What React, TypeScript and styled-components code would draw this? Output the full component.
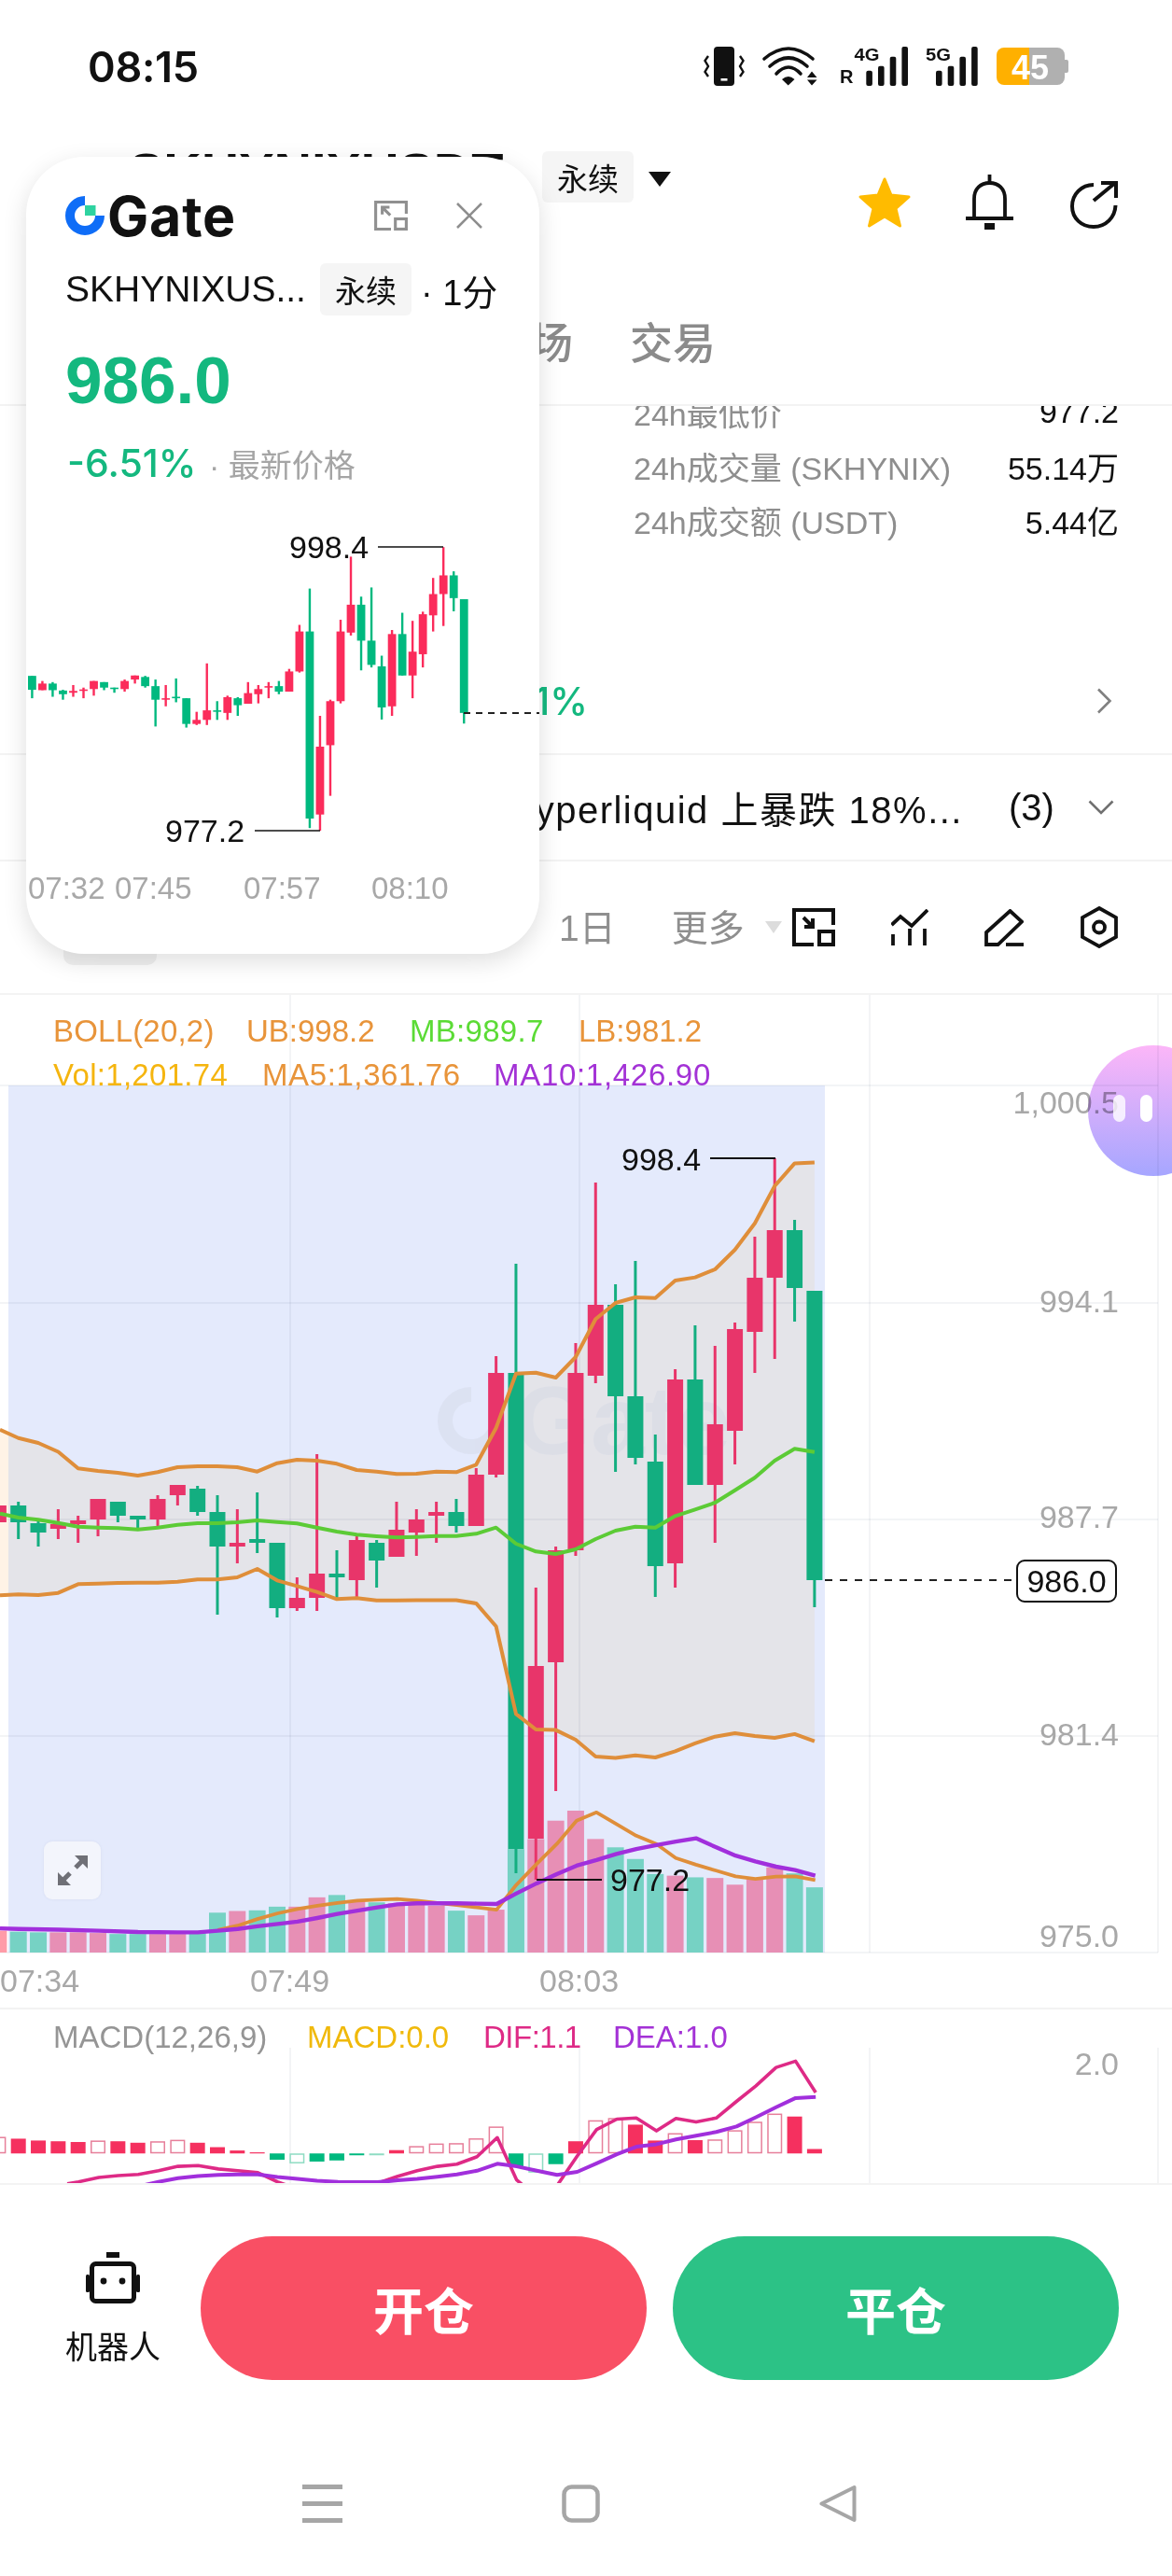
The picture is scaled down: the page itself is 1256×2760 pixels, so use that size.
import React from "react";
import styled, { createGlobalStyle } from "styled-components";

const SANS = `"Liberation Sans", "Noto Sans CJK SC", sans-serif`;

const Global = createGlobalStyle`
  html, body { margin: 0; padding: 0; background: #fff; }
  body { font-family: ${SANS}; }
`;

/* ---------- chart data (screen coordinates of the page) ---------- */
type Candle = [string, number, number, number, number];
const CANDLES: Candle[] = [
  ["g", 1592, 1592, 1630, 1653], ["r", 1606, 1613, 1631, 1631],
  ["g", 1609, 1613, 1631, 1649], ["g", 1630, 1632, 1642, 1657], ["r", 1617, 1633, 1638, 1649], ["r", 1624, 1629, 1633, 1653],
  ["r", 1606, 1606, 1628, 1646], ["g", 1609, 1609, 1624, 1631], ["g", 1624, 1624, 1628, 1638], ["r", 1602, 1606, 1628, 1635],
  ["r", 1591, 1591, 1602, 1613], ["g", 1592, 1595, 1620, 1624], ["g", 1602, 1620, 1657, 1730], ["r", 1617, 1653, 1657, 1675],
  ["g", 1599, 1649, 1653, 1664], ["g", 1653, 1653, 1723, 1733], ["r", 1690, 1712, 1723, 1726], ["r", 1558, 1686, 1712, 1726],
  ["g", 1661, 1686, 1690, 1712], ["r", 1646, 1650, 1693, 1712], ["g", 1650, 1653, 1672, 1701], ["r", 1609, 1639, 1668, 1668],
  ["r", 1617, 1628, 1642, 1667], ["r", 1609, 1620, 1624, 1653], ["g", 1606, 1620, 1635, 1642], ["r", 1573, 1580, 1635, 1635],
  ["r", 1453, 1471, 1580, 1583], ["g", 1354, 1471, 1981, 2007], ["r", 1701, 1785, 1970, 2014], ["r", 1657, 1661, 1781, 1919],
  ["r", 1439, 1471, 1661, 1667], ["r", 1267, 1398, 1474, 1482], ["g", 1376, 1398, 1496, 1577], ["g", 1351, 1496, 1562, 1569],
  ["g", 1537, 1566, 1678, 1711], ["r", 1467, 1478, 1675, 1701], ["g", 1420, 1478, 1591, 1591], ["r", 1442, 1526, 1591, 1653],
  ["r", 1417, 1424, 1533, 1569], ["r", 1325, 1369, 1427, 1471], ["r", 1241, 1318, 1369, 1456], ["g", 1307, 1318, 1380, 1416],
  ["g", 1383, 1383, 1693, 1722],
];
const X = (i: number) => 19.7 + 21.33 * i;

const UPPER = [1540.7, 1546, 1555.5, 1573.3, 1576, 1578, 1581, 1577.3, 1572, 1571, 1571, 1572, 1576.7, 1567.7, 1564, 1565, 1568.3, 1575, 1576.7, 1579.3, 1579, 1576.7, 1577.3, 1569.3, 1530, 1471.7, 1470.7, 1476, 1454, 1413.3, 1396, 1390, 1390.7, 1372, 1368.6, 1360, 1339, 1310.7, 1270.7, 1246.4, 1245.4];
const MID = [1626, 1628.3, 1631.7, 1635.7, 1636.7, 1637.3, 1638.7, 1636.7, 1633.7, 1632, 1632, 1631, 1629, 1630.7, 1632.3, 1636.7, 1641, 1644.3, 1646, 1647.3, 1646.7, 1645.7, 1645.7, 1643.3, 1636.7, 1654, 1662.3, 1665, 1660, 1649, 1640, 1635.7, 1636.7, 1624.3, 1617.3, 1610, 1596.7, 1583.3, 1565, 1552.3, 1555.7];
const LOWER = [1708.3, 1709, 1706.7, 1697.3, 1696.7, 1696, 1695.7, 1695.7, 1694.7, 1692.3, 1692.3, 1690, 1681, 1693.3, 1699.3, 1705.7, 1713.3, 1712.3, 1714.7, 1714.7, 1714.6, 1714.6, 1714.6, 1717.9, 1742.5, 1836.4, 1853, 1853.6, 1864, 1882, 1883.6, 1880.7, 1883, 1876.4, 1867.9, 1860.7, 1857, 1860, 1862, 1857.9, 1865.7];

const toPts = (ys: number[], startY: number) =>
  `0,${startY} ` + ys.map((y, i) => `${X(i).toFixed(1)},${y}`).join(" ");

type P = [number, number];
const z6 = (ps: P[]): P[] => ps.map(([x, y]) => [x / 2.497, 1640 + y / 2.8]);
const z7 = (ps: P[]): P[] => ps.map(([x, y]) => [500 + x / 2.074, 1640 + y / 2.8]);
const pts = (ps: P[]) => ps.map(([x, y]) => `${x.toFixed(1)},${y.toFixed(1)}`).join(" ");

const MA5 = [
  ...z6([[583, 1198], [636, 1185], [689, 1165], [743, 1148], [796, 1135], [849, 1125], [903, 1117], [956, 1110], [1010, 1107], [1063, 1105], [1116, 1110], [1170, 1117], [1222, 1123], [1276, 1130], [1329, 1137], [1382, 1062], [1436, 1000], [1490, 940], [1543, 870]]),
  ...z7([[289, 845], [333, 880], [377, 915], [422, 940], [465, 982], [510, 1002], [555, 1020], [598, 1037], [642, 1045], [688, 1038], [730, 1037], [775, 1048]]),
];
const MA10 = [
  ...z6([[0, 1193], [50, 1195], [156, 1197], [263, 1200], [369, 1204], [476, 1205], [529, 1205], [583, 1200], [636, 1195], [689, 1187], [743, 1180], [796, 1173], [849, 1162], [903, 1150], [956, 1140], [1010, 1130], [1063, 1121], [1116, 1118], [1170, 1118], [1222, 1118], [1276, 1119], [1329, 1120], [1382, 1088], [1436, 1058], [1490, 1030], [1543, 1005]]),
  ...z7([[289, 988], [333, 970], [377, 955], [422, 943], [465, 933], [510, 923], [555, 950], [598, 975], [642, 992], [688, 1008], [730, 1018], [775, 1035]]),
];

const VOL: [string, number][] = [
  ["o", 1200], ["t", 1203], ["t", 1205], ["p", 1205], ["p", 1205], ["p", 1207], ["t", 1210], ["t", 1210], ["p", 1210], ["p", 1210], ["t", 1208], ["t", 1146], ["p", 1141], ["t", 1139], ["t", 1128], ["p", 1128], ["p", 1100], ["t", 1093], ["p", 1110], ["t", 1115], ["p", 1118], ["p", 1120], ["p", 1125], ["t", 1140], ["p", 1154], ["p", 1137], ["t", 955], ["p", 925], ["p", 870], ["p", 840], ["p", 925], ["t", 950], ["t", 985], ["t", 1030], ["p", 1035], ["t", 1040], ["p", 1042], ["p", 1062], ["p", 1045], ["p", 1010], ["t", 1028], ["t", 1070],
];
const VOL_FILL: Record<string, string> = { o: "#FF9CA8", t: "#76D2C4", p: "#E78FB5" };

/* kind: R solid red, r hollow red, G solid green, g hollow green; y in zoom rows */
const MACD_BARS: [string, number][] = [
  ["r", 378], ["R", 383], ["R", 388], ["R", 390], ["R", 392], ["r", 388], ["R", 390], ["R", 394], ["r", 390], ["r", 386], ["R", 394], ["R", 406], ["R", 415], ["R", 420],
  ["G", 440], ["g", 450], ["G", 445], ["G", 442], ["G", 428], ["g", 427],
  ["R", 414], ["r", 403], ["r", 396], ["r", 395], ["r", 382], ["r", 350],
  ["G", 460], ["g", 475], ["G", 452],
  ["R", 390], ["r", 333], ["r", 327], ["R", 345], ["R", 388], ["r", 368], ["R", 387], ["r", 385], ["r", 360], ["r", 337], ["r", 315], ["R", 323], ["R", 411],
];
const zm = (ps: P[]) => ps.map(([x, y]) => `${(x / 1.248).toFixed(1)},${(2140 + y / 2.529).toFixed(1)}`).join(" ");
const MY = (y: number) => 2140 + y / 2.529;
const DIF = zm([[90, 505], [105, 500], [132, 488], [158, 483], [185, 480], [212, 470], [238, 458], [265, 456], [292, 465], [318, 470], [345, 475], [371, 500], [385, 510], [425, 540], [480, 540], [510, 500], [532, 485], [558, 470], [585, 458], [611, 452], [638, 432], [665, 380], [691, 495], [700, 510], [745, 510], [772, 430], [798, 358], [825, 330], [851, 327], [878, 362], [904, 328], [931, 338], [958, 327], [985, 282], [1011, 240], [1038, 190], [1064, 173], [1091, 258]]);
const DEA = zm([[190, 510], [212, 500], [238, 490], [265, 484], [292, 481], [318, 480], [345, 480], [371, 487], [398, 492], [424, 497], [452, 500], [478, 501], [505, 501], [532, 496], [558, 492], [585, 486], [611, 480], [638, 470], [665, 451], [691, 458], [718, 470], [745, 481], [772, 473], [798, 450], [825, 425], [851, 405], [878, 398], [904, 385], [931, 375], [958, 365], [985, 350], [1011, 325], [1038, 298], [1064, 273], [1091, 270]]);

/* ---------- page ---------- */
const Page = styled.div`
  position: relative;
  width: 1256px;
  height: 2760px;
  overflow: hidden;
  background: #fff;
  display: flex;
  flex-direction: column;
  color: #111;
  font-family: ${SANS};
`;

const StatusBar = styled.div`
  height: 142px;
  flex: none;
  display: flex;
  align-items: center;
  padding: 0 111px 0 94px;
  box-sizing: border-box;
`;
const Clock = styled.div`
  font-family: Inter, ${SANS};
  font-size: 45px;
  font-weight: 600;
  letter-spacing: -0.3px;
  color: #111;
`;
const StatusIcons = styled.div`
  margin-left: auto;
  display: flex;
  align-items: center;
  svg { display: block; flex: none; overflow: visible; }
`;

const HeaderRow = styled.div`
  height: 158px;
  flex: none;
  display: flex;
  align-items: flex-start;
  padding: 0 57px 0 138px;
  box-sizing: border-box;
`;
const Title = styled.div`
  width: 399px;
  margin-top: 12px;
  font-size: 56px;
  font-weight: 700;
  line-height: 60px;
  white-space: nowrap;
`;
const Tag = styled.div<{ $w: number; $h: number }>`
  width: ${(p) => p.$w}px;
  height: ${(p) => p.$h}px;
  flex: none;
  display: flex;
  align-items: center;
  justify-content: center;
  background: #f5f5f5;
  border-radius: 6px;
  font-size: 33px;
  color: #111;
`;
const HeaderTag = styled(Tag)`
  margin: 20px 0 0 44px;
`;
const HeaderGlyph = styled.div<{ $top: number; $left: number }>`
  margin: ${(p) => p.$top}px 0 0 ${(p) => p.$left}px;
  flex: none;
  line-height: 0;
`;

const TabsRow = styled.div`
  height: 135px;
  flex: none;
  box-sizing: border-box;
  border-bottom: 2px solid #f3f3f3;
  padding-bottom: 6px;
  display: flex;
  align-items: center;
  padding-left: 522px;
  gap: 61px;
`;
const TabLabel = styled.div`
  font-size: 46px;
  font-weight: 500;
  color: #8b8b8b;
`;

const StatsClip = styled.div`
  height: 260px;
  flex: none;
  overflow: hidden;
  padding: 0 57px 0 679px;
  box-sizing: border-box;
`;
const StatsInner = styled.div`
  margin-top: -23px;
`;
const StatRow = styled.div`
  height: 58px;
  display: flex;
  align-items: center;
  justify-content: space-between;
  font-size: 34px;
`;
const StatLabel = styled.span`
  color: #8e8e8e;
`;
const StatValue = styled.span`
  color: #111;
`;

const FundingRow = styled.div`
  height: 114px;
  flex: none;
  box-sizing: border-box;
  border-bottom: 2px solid #f3f3f3;
  display: flex;
  align-items: center;
  padding-right: 64px;
`;
const FundingValue = styled.div`
  width: 630px;
  text-align: right;
  font-family: Inter, ${SANS};
  font-size: 41px;
  font-weight: 500;
  color: #14b87f;
`;
const NewsRow = styled.div`
  height: 114px;
  flex: none;
  box-sizing: border-box;
  border-bottom: 2px solid #f3f3f3;
  display: flex;
  align-items: center;
`;
const NewsText = styled.div`
  width: 1032px;
  text-align: right;
  white-space: nowrap;
  font-size: 40px;
  letter-spacing: 1.5px;
  color: #111;
`;
const NewsCount = styled.div`
  margin-left: 49px;
  font-size: 40px;
  color: #111;
`;

const Toolbar = styled.div`
  height: 143px;
  flex: none;
  box-sizing: border-box;
  border-bottom: 2px solid #f3f3f3;
  display: flex;
  align-items: center;
  padding-left: 68px;
`;
const ActivePill = styled.div`
  width: 100px;
  height: 65px;
  margin-top: 16px;
  border-radius: 10px;
  background: #f1f1f1;
  flex: none;
`;
const ToolLabel = styled.div<{ $ml: number }>`
  margin-left: ${(p) => p.$ml}px;
  margin-top: -5px;
  font-size: 39px;
  color: #8f8f8f;
  white-space: nowrap;
  flex: none;
`;
const ToolIcon = styled.div<{ $ml: number }>`
  margin-left: ${(p) => p.$ml}px;
  line-height: 0;
  flex: none;
`;

const ChartSection = styled.div`
  position: relative;
  height: 1085px;
  flex: none;
`;
const ChartSvg = styled.svg`
  display: block;
`;
const Legend = styled.div<{ $top: number }>`
  position: absolute;
  left: 57px;
  top: ${(p) => p.$top}px;
`;
const LegendRow = styled.div`
  display: flex;
  height: 47px;
  align-items: center;
  white-space: nowrap;
`;
const LegendItem = styled.span<{ $w?: number; $c: string; $ls?: number }>`
  font-size: 33px;
  color: ${(p) => p.$c};
  letter-spacing: ${(p) => p.$ls ?? 0}px;
  width: ${(p) => (p.$w ? `${p.$w}px` : "auto")};
  flex: none;
`;
const ChartText = styled.text<{ $c: string; $size?: number }>`
  font-family: ${SANS};
  font-size: ${(p) => p.$size ?? 34}px;
  fill: ${(p) => p.$c};
  dominant-baseline: central;
`;
const ExpandButton = styled.div`
  position: absolute;
  left: 47px;
  top: 907px;
  width: 61px;
  height: 62px;
  border-radius: 9px;
  background: #f3f5fc;
  box-shadow: 0 0 3px rgba(120, 130, 160, 0.12);
  display: flex;
  align-items: center;
  justify-content: center;
`;

const MacdSection = styled.div`
  position: relative;
  flex: none;
  border-top: 2px solid #f3f3f3;
  border-bottom: 2px solid #f3f3f3;
`;

const ActionBar = styled.div`
  display: flex;
  flex: none;
  height: 154px;
  margin-top: 55px;
  padding-left: 70px;
`;
const Robot = styled.div`
  width: 102px;
  flex: none;
  display: flex;
  flex-direction: column;
  align-items: center;
  padding-top: 17px;
  box-sizing: border-box;
`;
const RobotLabel = styled.div`
  margin-top: 27px;
  font-size: 34px;
  line-height: 40px;
  color: #111;
`;
const ActionButton = styled.div<{ $bg: string; $ml: number }>`
  width: 478px;
  height: 154px;
  margin-left: ${(p) => p.$ml}px;
  border-radius: 77px;
  background: ${(p) => p.$bg};
  color: #fff;
  font-size: 54px;
  font-weight: 700;
  display: flex;
  align-items: center;
  justify-content: center;
  flex: none;
`;
const NavBar = styled.div`
  flex: none;
  margin-top: 112px;
  padding-left: 324px;
  display: flex;
  gap: 235px;
  svg { display: block; flex: none; }
`;

/* floating picture-in-picture card */
const FloatCard = styled.div`
  position: absolute;
  left: 28px;
  top: 168px;
  width: 550px;
  height: 854px;
  border-radius: 62px;
  background: #fff;
  box-shadow: 0 8px 26px rgba(0, 0, 0, 0.13);
  overflow: hidden;
  display: flex;
  flex-direction: column;
`;
const FloatLogoRow = styled.div`
  height: 102px;
  margin-top: 12px;
  flex: none;
  display: flex;
  align-items: center;
  padding-left: 42px;
  svg { display: block; flex: none; }
`;
const GateWord = styled.span`
  width: 139px;
  flex: none;
  margin-left: 3px;
  font-family: Inter, ${SANS};
  font-weight: 700;
  font-size: 59px;
  letter-spacing: 0.8px;
  color: #111;
`;
const SymbolRow = styled.div`
  height: 56px;
  flex: none;
  display: flex;
  align-items: center;
  padding-left: 42px;
  font-size: 39px;
  white-space: nowrap;
`;
const SymbolName = styled.span`
  width: 273px;
  flex: none;
`;
const SymbolSuffix = styled.span`
  margin-left: 10px;
  font-size: 38px;
`;
const PriceRow = styled.div`
  height: 100px;
  margin-top: 19px;
  flex: none;
  display: flex;
  align-items: center;
  padding-left: 42px;
  font-size: 71px;
  font-weight: 700;
  color: #14b87f;
`;
const ChangeRow = styled.div`
  height: 78px;
  flex: none;
  display: flex;
  align-items: center;
  padding-left: 44px;
`;
const ChangeValue = styled.span`
  width: 152px;
  flex: none;
  font-family: Inter, ${SANS};
  font-size: 41px;
  font-weight: 500;
  color: #14b87f;
`;
const ChangeHint = styled.span`
  font-size: 34px;
  color: #a5a5a5;
`;

const AssistBlob = styled.div`
  position: absolute;
  left: 1166px;
  top: 1120px;
  width: 140px;
  height: 140px;
  border-radius: 50%;
  background: linear-gradient(180deg, #fcb6f8 0%, #a6a6ff 100%);
  mix-blend-mode: multiply;
`;
const BlobEye = styled.span<{ $l: number; $o: number }>`
  position: absolute;
  top: 1173px;
  left: ${(p) => p.$l}px;
  width: 13px;
  height: 29px;
  border-radius: 7px;
  background: #fff;
  opacity: ${(p) => p.$o};
`;

/* ---------- icons ---------- */
const VibrateIcon = () => (
  <svg width="44" height="42" viewBox="0 0 44 42">
    <rect x="11" y="0" width="22" height="42" rx="4" fill="#111" />
    <rect x="18.5" y="34" width="7" height="2.6" fill="#fff" />
    <g fill="none" stroke="#111" strokeWidth="2.4">
      <polyline points="5,10 1.5,15 5,21 1.5,27 5,32" />
      <polyline points="39,10 42.5,15 39,21 42.5,27 39,32" />
    </g>
  </svg>
);
const WifiIcon = () => (
  <svg width="60" height="42" viewBox="0 0 60 42">
    <g fill="none" stroke="#111" strokeWidth="3.6" strokeLinecap="round">
      <path d="M2 13 Q28 -9 54 13" />
      <path d="M8 21 Q28 3 48 21" />
      <path d="M15 29 Q28 15 41 29" />
    </g>
    <path d="M21 35 Q28 29 34.5 35 L27.7 41.5 Z" fill="#111" />
    <path d="M48 33 L58.5 33 L53 26.5 Z M48 35.5 L58.5 35.5 L53 41.5 Z" fill="#111" />
  </svg>
);
const CellIcon = ({ label, roaming }: { label: string; roaming?: boolean }) => {
  const ox = roaming ? 28.3 : 11;
  return (
    <svg width={roaming ? 73 : 55} height="42" viewBox={`0 0 ${roaming ? 73 : 55} 42`}>
      {roaming && (
        <ChartText x="0" y="32" $c="#111" $size={20} fontWeight="700">R</ChartText>
      )}
      <ChartText x={roaming ? 15.5 : 0} y="8.5" $c="#111" $size={19} fontWeight="700" textLength="27" lengthAdjust="spacingAndGlyphs">{label}</ChartText>
      {[25.7, 20.7, 10.7, 0].map((t, i) => (
        <rect key={i} x={ox + i * 12.7} y={t} width="6.6" height={42 - t} rx="2" fill="#111" />
      ))}
    </svg>
  );
};
const BatteryIcon = () => (
  <svg width="77" height="40" viewBox="0 0 77 40">
    <path d="M8 0 H35 V40 H8 A8 8 0 0 1 0 32 V8 A8 8 0 0 1 8 0 Z" fill="#FFB000" />
    <path d="M35 0 H65 A8 8 0 0 1 73 8 V32 A8 8 0 0 1 65 40 H35 Z" fill="#B0B0B0" />
    <path d="M73 13 H75 A2 2 0 0 1 77 15 V25 A2 2 0 0 1 75 27 H73 Z" fill="#B0B0B0" />
    <ChartText x="36" y="21" textAnchor="middle" $c="#fff" $size={36} fontWeight="700">45</ChartText>
  </svg>
);
const StarIcon = () => (
  <svg width="58" height="56" viewBox="0 0 58 56">
    <path d="M29 3 L36 20 L55 22 L41 34.5 L45.5 53 L29 43 L12.5 53 L17 34.5 L3 22 L22 20 Z" fill="#FFBB00" stroke="#FFBB00" strokeWidth="3" strokeLinejoin="round" />
  </svg>
);
const BellIcon = () => (
  <svg width="51" height="59" viewBox="0 0 51 59">
    <g fill="none" stroke="#111" strokeWidth="3.8">
      <path d="M9 47 V26 C9 15 16 9 25.5 9 C35 9 42 15 42 26 V47" />
      <path d="M0 47 H51" />
      <path d="M25.5 0 V9" />
    </g>
    <rect x="20" y="52" width="11" height="7" fill="#111" />
  </svg>
);
const ShareIcon = () => (
  <svg width="51" height="52" viewBox="0 0 51 52">
    <g fill="none" stroke="#111" strokeWidth="4">
      <path d="M25 5 C12 5 2 15 2 28 C2 41 12 50 25 50 C38 50 48 40 48.5 27" />
      <path d="M25 22 L48 3" />
      <path d="M33 3 H49 V19" />
    </g>
  </svg>
);
const ChevronRight = () => (
  <svg width="17" height="28" viewBox="0 0 17 28">
    <path d="M2 1.5 L14.5 14 L2 26.5" fill="none" stroke="#808080" strokeWidth="2.6" />
  </svg>
);
const ChevronDown = () => (
  <svg width="28" height="16" viewBox="0 0 28 16">
    <path d="M1.5 1.5 L14 14 L26.5 1.5" fill="none" stroke="#707070" strokeWidth="2.6" />
  </svg>
);
const SmallCaret = () => (
  <svg width="18" height="13" viewBox="0 0 18 13">
    <path d="M0 0 H18 L9 13 Z" fill="#dcdcdc" />
  </svg>
);
const PipIcon = ({ color = "#111", size = 46, h = 41, inward = true }: { color?: string; size?: number; h?: number; inward?: boolean }) => (
  <svg width={size} height={h} viewBox="0 0 46 41">
    <g fill="none" stroke={color} strokeWidth="4">
      <path d="M23 39 H2 V2 H44 V18" />
      <rect x="29" y="25" width="15" height="14" />
      {inward ? <path d="M12 10 L22 20 M22 11 V20 H13" /> : <path d="M22 20 L11 9 M11 19 V9 H21" />}
    </g>
  </svg>
);
const IndicatorIcon = () => (
  <svg width="40" height="40" viewBox="0 0 40 40">
    <g fill="none" stroke="#111" strokeWidth="3.8">
      <path d="M0.5 17 L10 8 L22 18 L39 1" />
      <path d="M2 27 V39 M20 21 V39 M36 21 V39" />
    </g>
  </svg>
);
const PenIcon = () => (
  <svg width="42" height="40" viewBox="0 0 42 40">
    <g fill="none" stroke="#111" strokeWidth="3.8">
      <path d="M2 25 L27.5 2 L40 13.5 L14.5 38 H2 Z" />
      <path d="M23 38 H42" />
    </g>
  </svg>
);
const HexIcon = () => (
  <svg width="40" height="45" viewBox="0 0 40 45">
    <g fill="none" stroke="#111" strokeWidth="3.8">
      <path d="M20 2 L38 12 V33 L20 43 L2 33 V12 Z" />
      <circle cx="20" cy="22.5" r="6" />
    </g>
  </svg>
);
const ExpandIcon = () => (
  <svg width="32" height="32" viewBox="0 0 32 32">
    <path d="M18 0 H32 V14 Z M0 18 V32 H14 Z" fill="#6f7077" />
    <path d="M27 5 L19 13 M5 27 L13 19" stroke="#6f7077" strokeWidth="5" />
  </svg>
);
const RobotIcon = () => (
  <svg width="58" height="55" viewBox="0 0 58 55">
    <rect x="22" y="0" width="14" height="6" fill="#111" />
    <rect x="6.5" y="12.5" width="45" height="40" rx="4" fill="none" stroke="#111" strokeWidth="5" />
    <rect x="0" y="24" width="4" height="19" rx="1.5" fill="#111" />
    <rect x="54" y="24" width="4" height="19" rx="1.5" fill="#111" />
    <circle cx="19" cy="31" r="3.4" fill="#111" />
    <circle cx="39" cy="31" r="3.4" fill="#111" />
  </svg>
);
const NavMenu = () => (
  <svg width="43" height="41" viewBox="0 0 43 41">
    <path d="M0 2.5 H43 M0 20.5 H43 M0 38.5 H43" stroke="#a6a6a6" strokeWidth="5" />
  </svg>
);
const NavHome = () => (
  <svg width="41" height="41" viewBox="0 0 41 41">
    <rect x="2.5" y="2.5" width="36" height="36" rx="8" fill="none" stroke="#a6a6a6" strokeWidth="4.5" />
  </svg>
);
const NavBack = () => (
  <svg width="40" height="41" viewBox="0 0 40 41">
    <path d="M37.5 3 V38 L2.5 20.5 Z" fill="none" stroke="#a6a6a6" strokeWidth="4" strokeLinejoin="round" />
  </svg>
);
const GateMark = () => (
  <svg width="42" height="42" viewBox="0 0 42 42">
    <path d="M21 5 A16 16 0 1 0 37 21" fill="none" stroke="#0F6DF7" strokeWidth="10" />
    <rect x="21" y="10" width="11.5" height="11" fill="#2ED3A0" />
  </svg>
);
const CloseIcon = () => (
  <svg width="28" height="28" viewBox="0 0 28 28">
    <path d="M1 1 L27 27 M27 1 L1 27" stroke="#8e8e8e" strokeWidth="2.6" />
  </svg>
);

/* ---------- chart drawings ---------- */
const MainChart = () => {
  const bandPoly = `${UPPER.map((y, i) => `${X(i).toFixed(1)},${y}`).join(" ")} ${LOWER.map((y, i) => `${X(i).toFixed(1)},${y}`).reverse().join(" ")}`;
  const GRID = "rgba(40,50,90,0.055)";
  return (
    <ChartSvg width="1256" height="1085" viewBox="0 1066 1256 1085">
      <rect x="9" y="1163" width="875" height="929" fill="#E4EAFC" />
      <polygon points={`0,1532 9,1536 9,1709 0,1709`} fill="#FFF3E6" />
      <polygon points={`9,1537 ${bandPoly} 9,1709`} fill="#E4E4E9" />
      {[311, 621, 932, 1241].map((x) => (
        <line key={x} x1={x} x2={x} y1="1066" y2="2092" stroke={GRID} strokeWidth="2" />
      ))}
      {[1163, 1396, 1628, 1860, 2092].map((y) => (
        <line key={y} x1="0" x2="1241" y1={y} y2={y} stroke={GRID} strokeWidth="2" />
      ))}
      <g opacity="0.42">
        <path d="M505 1494 A28 28 0 1 0 533 1522" fill="none" stroke="#D2D7E4" strokeWidth="16" />
        <ChartText x="552" y="1522" $c="#D2D7E4" $size={104} fontWeight="700">Gate</ChartText>
      </g>
      {VOL.map(([k, t], n) => {
        const y = 1640 + t / 2.8;
        return <rect key={n} x={X(n - 1) - 9} y={y} width="18" height={2092 - y} fill={VOL_FILL[k]} />;
      })}
      {CANDLES.map(([c, wt, bt, bb, wb], n) => {
        const x = X(n - 2);
        const fill = c === "g" ? "#13AE80" : "#E8356A";
        return (
          <g key={n} fill={fill}>
            <rect x={x - 1.5} y={wt} width="3" height={wb - wt} />
            <rect x={x - 8.5} y={bt} width="17" height={bb - bt} />
          </g>
        );
      })}
      <g fill="none" strokeLinejoin="round">
        <polyline points={toPts(UPPER, 1531.8)} stroke="#DF8E3A" strokeWidth="4" />
        <polyline points={toPts(LOWER, 1709.3)} stroke="#DF8E3A" strokeWidth="4" />
        <polyline points={toPts(MID, 1621.7)} stroke="#5CCB36" strokeWidth="4" />
        <polyline points={pts(MA5)} stroke="#DF8E3A" strokeWidth="3.8" />
        <polyline points={pts(MA10)} stroke="#A12FDC" strokeWidth="4.4" />
      </g>
      <line x1="761" x2="831" y1="1241" y2="1241" stroke="#111" strokeWidth="2" />
      <ChartText x="666" y="1242" $c="#111">998.4</ChartText>
      <line x1="575" x2="645" y1="2014" y2="2014" stroke="#111" strokeWidth="2" />
      <ChartText x="654" y="2014" $c="#111">977.2</ChartText>
      <line x1="884" x2="1084" y1="1693" y2="1693" stroke="#222" strokeWidth="2" strokeDasharray="8 8" />
      <rect x="1090" y="1672" width="106" height="44" rx="8" fill="#fff" stroke="#111" strokeWidth="2" />
      <ChartText x="1143" y="1694" textAnchor="middle" $c="#111">986.0</ChartText>
      {[["1,000.5", 1181], ["994.1", 1394], ["987.7", 1625], ["981.4", 1858], ["975.0", 2074]].map(([t, y]) => (
        <ChartText key={t as string} x="1199" y={y as number} textAnchor="end" $c="#A8A8A8">{t}</ChartText>
      ))}
      {[["07:34", 0], ["07:49", 268], ["08:03", 578]].map(([t, x]) => (
        <ChartText key={t as string} x={x as number} y="2122" $c="#A8A8A8">{t}</ChartText>
      ))}
    </ChartSvg>
  );
};

const MacdChart = () => {
  const zero = MY(423);
  const GRID = "rgba(40,50,90,0.055)";
  return (
    <ChartSvg width="1256" height="186" viewBox="0 2153 1256 186">
      {[311, 621, 932, 1241].map((x) => (
        <line key={x} x1={x} x2={x} y1="2194" y2="2339" stroke={GRID} strokeWidth="2" />
      ))}
      {MACD_BARS.map(([k, z], n) => {
        const x = X(n - 1) - 8;
        const y = MY(z);
        const up = k === "r" || k === "R";
        const top = Math.min(y, zero);
        const h = Math.abs(zero - y);
        const solid = k === "R" || k === "G";
        const col = up ? "#F5305F" : "#00B97F";
        if (solid) return <rect key={n} x={x} y={top} width="16" height={h} fill={col} />;
        return (
          <rect key={n} x={x + 0.75} y={top + 0.75} width="14.5" height={Math.max(h - 1.5, 0.5)} fill="#fff" stroke={up ? "#E77F9A" : "#8FDCC3"} strokeWidth="1.5" />
        );
      })}
      <g fill="none" strokeLinejoin="round">
        <polyline points={DIF} stroke="#DE2A86" strokeWidth="3.6" />
        <polyline points={DEA} stroke="#A12FDC" strokeWidth="4" />
      </g>
      <ChartText x="1199" y="2211" textAnchor="end" $c="#A8A8A8">2.0</ChartText>
    </ChartSvg>
  );
};

const MiniChart = () => {
  const my = (y: number) => 586.2 + (y - 1241) * 0.393;
  return (
    <ChartSvg width="550" height="487" viewBox="28 535 550 487">
      {CANDLES.map(([c, wt, bt, bb, wb], j) => {
        const x = 34.4 + 11.02 * j;
        const fill = c === "g" ? "#00B97F" : "#FB2C5B";
        return (
          <g key={j} fill={fill}>
            <rect x={x - 1.2} y={my(wt)} width="2.4" height={my(wb) - my(wt)} />
            <rect x={x - 4.4} y={my(bt)} width="8.8" height={Math.max(my(bb) - my(bt), 1.5)} />
          </g>
        );
      })}
      <line x1="405" x2="475" y1="586" y2="586" stroke="#111" strokeWidth="1.6" />
      <ChartText x="310" y="586" $c="#111">998.4</ChartText>
      <line x1="273" x2="343" y1="890" y2="890" stroke="#111" strokeWidth="1.6" />
      <ChartText x="177" y="890" $c="#111">977.2</ChartText>
      <line x1="497" x2="578" y1="764" y2="764" stroke="#222" strokeWidth="2" strokeDasharray="7 6" />
      {[["07:32", 30], ["07:45", 123], ["07:57", 261], ["08:10", 398]].map(([t, x]) => (
        <ChartText key={t as string} x={x as number} y="951" $c="#A8A8A8" $size={33}>{t}</ChartText>
      ))}
    </ChartSvg>
  );
};

export default function App() {
  return (
    <Page>
      <Global />
      <StatusBar>
        <Clock>08:15</Clock>
        <StatusIcons>
          <VibrateIcon />
          <HeaderGlyph $top={0} $left={19}><WifiIcon /></HeaderGlyph>
          <HeaderGlyph $top={0} $left={23}><CellIcon label="4G" roaming /></HeaderGlyph>
          <HeaderGlyph $top={0} $left={19}><CellIcon label="5G" /></HeaderGlyph>
          <HeaderGlyph $top={0} $left={21}><BatteryIcon /></HeaderGlyph>
        </StatusIcons>
      </StatusBar>

      <HeaderRow>
        <Title>SKHYNIXUSDT</Title>
        <HeaderTag $w={98} $h={55}>永续</HeaderTag>
        <HeaderGlyph $top={42} $left={16}>
          <svg width="24" height="16" viewBox="0 0 24 16"><path d="M0 0 H24 L12 16 Z" fill="#111" /></svg>
        </HeaderGlyph>
        <HeaderGlyph $top={47} $left={200}><StarIcon /></HeaderGlyph>
        <HeaderGlyph $top={45} $left={58}><BellIcon /></HeaderGlyph>
        <HeaderGlyph $top={51} $left={61}><ShareIcon /></HeaderGlyph>
      </HeaderRow>

      <TabsRow>
        <TabLabel>市场</TabLabel>
        <TabLabel>交易</TabLabel>
      </TabsRow>

      <StatsClip>
        <StatsInner>
          <StatRow><StatLabel>24h最低价</StatLabel><StatValue>977.2</StatValue></StatRow>
          <StatRow><StatLabel>24h成交量 (SKHYNIX)</StatLabel><StatValue>55.14万</StatValue></StatRow>
          <StatRow><StatLabel>24h成交额 (USDT)</StatLabel><StatValue>5.44亿</StatValue></StatRow>
        </StatsInner>
      </StatsClip>

      <FundingRow>
        <FundingValue>-6.51%</FundingValue>
        <HeaderGlyph $top={0} $left={545}><ChevronRight /></HeaderGlyph>
      </FundingRow>

      <NewsRow>
        <NewsText>Hyperliquid 上暴跌 18%...</NewsText>
        <NewsCount>(3)</NewsCount>
        <HeaderGlyph $top={0} $left={36}><ChevronDown /></HeaderGlyph>
      </NewsRow>

      <Toolbar>
        <ActivePill />
        <ToolLabel $ml={431}>1日</ToolLabel>
        <ToolLabel $ml={60}>更多</ToolLabel>
        <ToolIcon $ml={22}><SmallCaret /></ToolIcon>
        <ToolIcon $ml={11}><PipIcon /></ToolIcon>
        <ToolIcon $ml={60}><IndicatorIcon /></ToolIcon>
        <ToolIcon $ml={60}><PenIcon /></ToolIcon>
        <ToolIcon $ml={61}><HexIcon /></ToolIcon>
      </Toolbar>

      <ChartSection>
        <MainChart />
        <Legend $top={15}>
          <LegendRow>
            <LegendItem $w={207} $c="#E8943A" $ls={0.2}>BOLL(20,2)</LegendItem>
            <LegendItem $w={175} $c="#E8943A">UB:998.2</LegendItem>
            <LegendItem $w={181} $c="#5BDB35" $ls={0.3}>MB:989.7</LegendItem>
            <LegendItem $c="#E8943A">LB:981.2</LegendItem>
          </LegendRow>
          <LegendRow>
            <LegendItem $w={224} $c="#F5B50F" $ls={0.3}>Vol:1,201.74</LegendItem>
            <LegendItem $w={248} $c="#E8943A" $ls={0.6}>MA5:1,361.76</LegendItem>
            <LegendItem $c="#A332D6" $ls={0.7}>MA10:1,426.90</LegendItem>
          </LegendRow>
        </Legend>
        <ExpandButton><ExpandIcon /></ExpandButton>
      </ChartSection>

      <MacdSection>
        <MacdChart />
        <Legend $top={6}>
          <LegendRow>
            <LegendItem $w={272} $c="#959595">MACD(12,26,9)</LegendItem>
            <LegendItem $w={189} $c="#F0B90B">MACD:0.0</LegendItem>
            <LegendItem $w={139} $c="#DE2A86" $ls={-0.5}>DIF:1.1</LegendItem>
            <LegendItem $c="#A332D6">DEA:1.0</LegendItem>
          </LegendRow>
        </Legend>
      </MacdSection>

      <ActionBar>
        <Robot>
          <RobotIcon />
          <RobotLabel>机器人</RobotLabel>
        </Robot>
        <ActionButton $bg="#F94F64" $ml={43}>开仓</ActionButton>
        <ActionButton $bg="#2CC286" $ml={28}>平仓</ActionButton>
      </ActionBar>

      <NavBar>
        <NavMenu />
        <NavHome />
        <NavBack />
      </NavBar>

      <FloatCard>
        <FloatLogoRow>
          <GateMark />
          <GateWord>Gate</GateWord>
          <HeaderGlyph $top={0} $left={147}><PipIcon color="#909090" size={36} h={32} inward={false} /></HeaderGlyph>
          <HeaderGlyph $top={0} $left={52}><CloseIcon /></HeaderGlyph>
        </FloatLogoRow>
        <SymbolRow>
          <SymbolName>SKHYNIXUS...</SymbolName>
          <Tag $w={98} $h={56}>永续</Tag>
          <SymbolSuffix>· 1分</SymbolSuffix>
        </SymbolRow>
        <PriceRow>986.0</PriceRow>
        <ChangeRow>
          <ChangeValue>-6.51%</ChangeValue>
          <ChangeHint>· 最新价格</ChangeHint>
        </ChangeRow>
        <MiniChart />
      </FloatCard>

      <AssistBlob />
      <BlobEye $l={1193} $o={0.8} />
      <BlobEye $l={1222} $o={1} />
    </Page>
  );
}
